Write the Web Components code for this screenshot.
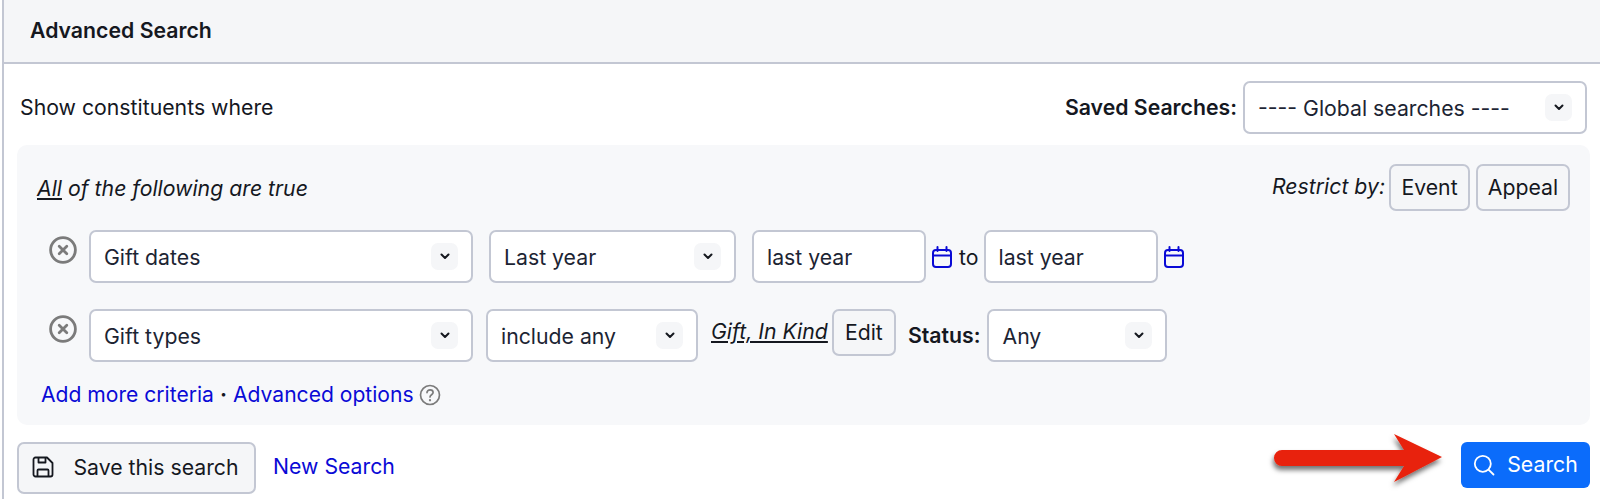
<!DOCTYPE html>
<html lang="en">
<head>
<meta charset="utf-8">
<title>Advanced Search</title>
<style>
  html, body { margin: 0; padding: 0; height: 499px; overflow: hidden; background: #fff; }
  body { font-family: Inter, "Noto Sans", sans-serif; font-size: 21.25px; color: #15181f; }
</style>
</head>
<body>

<search-box>
  <span slot="title">Advanced Search</span>

  <span slot="intro">Show constituents where</span>
  <saved-searches slot="intro-right"></saved-searches>

  <criteria-panel slot="panel">
    <span slot="heading"><u>All</u> of the following are true</span>
    <restrict-by slot="restrict"></restrict-by>

    <criteria-row slot="rows" pad="19">
      <drop-select style="width:384px">Gift dates</drop-select>
      <drop-select style="width:247px;margin-left:16px">Last year</drop-select>
      <date-range></date-range>
    </criteria-row>

    <criteria-row slot="rows" pad="26">
      <drop-select style="width:384px">Gift types</drop-select>
      <drop-select style="width:212px;margin-left:13px">include any</drop-select>
      <type-status></type-status>
    </criteria-row>

    <panel-links slot="links"></panel-links>
  </criteria-panel>

  <search-footer slot="footer"></search-footer>
</search-box>

<script>
// Small helper, every component is just a template in an open shadow root
const define = (name, css, html, extra) => {
  const template = document.createElement('template');
  template.innerHTML = `<style>${css}</style>${html}`;
  class Element_ extends HTMLElement {
    constructor() {
      super();
      this.attachShadow({ mode: 'open' });
      this.shadowRoot.appendChild(template.content.cloneNode(true));
    }
    connectedCallback() {
      if (extra) extra.call(this);
    }
  }
  customElements.define(name, Element_);
};

const chevron = `<svg width="10" height="7" viewBox="0 0 10 7" fill="none" stroke="#15181f" stroke-width="2" stroke-linecap="round" stroke-linejoin="round"><path d="M1.500 1.500 5 5l3.500-3.500"/></svg>`;

const calendar = `<svg width="20" height="22" viewBox="0 0 20 22" fill="none" stroke="#0a0ad6" stroke-width="2" stroke-linecap="round" stroke-linejoin="round"><rect x="1" y="4" width="18" height="17" rx="3"/><path d="M2 9.500h16M5.500 1v4M14.500 1v4"/></svg>`;

const removeIcon = `<svg width="28" height="28" viewBox="0 0 28 28" fill="none" stroke="#7b7b7b" stroke-width="2.800" stroke-linecap="round"><circle cx="14" cy="14" r="12.400"/><path d="m10.200 10.200 7.600 7.600M17.800 10.200l-7.600 7.600"/></svg>`;

// ---- basic controls ----

define('drop-select', `
  :host { display: block; box-sizing: border-box; height: 53px; flex: none; }
  .box {
    box-sizing: border-box; height: 100%; display: flex; align-items: center; justify-content: space-between;
    padding: 0 13px 0 13px; background: #fff; border: 2px solid #c3c7d3; border-radius: 7px;
    color: #1c2433; white-space: nowrap;
  }
  .arrow { width: 27px; height: 27px; border-radius: 7px; background: #f5f6f8; display: flex; align-items: center; justify-content: center; }
`, `<div class="box"><span><slot></slot></span><span class="arrow">${chevron}</span></div>`);

define('text-input', `
  :host { display: block; height: 53px; flex: none; }
  .box {
    box-sizing: border-box; height: 100%; display: flex; align-items: center;
    padding: 0 13px; background: #fff; border: 2px solid #c3c7d3; border-radius: 7px;
    color: #1c2433;
  }
`, `<div class="box"><slot></slot></div>`);

define('soft-button', `
  :host { display: inline-block; flex: none; }
  .btn {
    box-sizing: border-box; height: 100%; padding-bottom: 2px; display: flex; align-items: center; justify-content: center; gap: 19px;
    background: #f5f6f8; border: 2px solid #c3c7d3; border-radius: 7px;
    color: #15181f; white-space: nowrap;
  }
`, `<div class="btn"><slot></slot></div>`);

// ---- page parts ----

define('saved-searches', `
  :host { display: flex; align-items: center; gap: 6px; }
  b { font-weight: 600; padding-bottom: 2px; }
`, `<b>Saved Searches:</b><drop-select style="width:344px">---- Global searches ----</drop-select>`);

define('restrict-by', `
  :host { display: flex; align-items: center; gap: 6px; }
  i { padding: 0 0 3px 0; margin-right: -2px; }
  soft-button { height: 47px; }
`, `<i>Restrict by:</i><soft-button style="width:81px">Event</soft-button><soft-button style="width:94px">Appeal</soft-button>`);

define('date-range', `
  :host { display: flex; align-items: center; margin-left: 16px; }
  .cal { display: flex; margin-left: 6px; padding-top: 0; }
  .to { margin: 0 5px 0 7px; }
`, `<text-input style="width:174px">last year</text-input><span class="cal">${calendar}</span><span class="to">to</span><text-input style="width:174px">last year</text-input><span class="cal">${calendar}</span>`);

define('type-status', `
  :host { display: flex; align-items: flex-start; margin-left: 13px; }
  .types { font-style: italic; text-decoration: underline; line-height: 44px; margin-right: 4px; white-space: nowrap; }
  soft-button { height: 47px; width: 64px; }
  b { font-weight: 600; line-height: 52px; margin: 0 7px 0 12px; white-space: nowrap; }
`, `<span class="types">Gift, In Kind</span><soft-button>Edit</soft-button><b>Status:</b><drop-select style="width:180px">Any</drop-select>`);

define('criteria-row', `
  :host { display: flex; align-items: flex-start; padding-left: 32px; }
  .remove { display: flex; width: 28px; margin-right: 12px; margin-top: 6px; flex: none; }
`, `<span class="remove">${removeIcon}</span><slot></slot>`, function () {
  this.style.marginTop = this.getAttribute('pad') + 'px';
});

define('panel-links', `
  :host { display: flex; align-items: center; padding-left: 24px; margin-top: 20px; font-size: 21.100px; }
  a { color: #0a0ad6; text-decoration: none; }
  .dot { margin: 0 6px; font-weight: 700; }
  svg { margin-left: 5px; }
`, `<a href="#">Add more criteria</a><span class="dot">·</span><a href="#">Advanced options</a>
  <svg width="22" height="22" viewBox="0 0 22 22" fill="none" stroke="#7b7b7b" stroke-width="1.700" stroke-linecap="round"><circle cx="11" cy="11" r="9.500"/><path d="M8 8.600c0-1.700 1.300-2.800 3.100-2.800s3 1.100 3 2.600c0 2.300-3.100 2.400-3.100 4.600"/><path d="M11 16.100v.2" stroke-width="2.200"/></svg>`);

define('criteria-panel', `
  :host { display: block; margin: 11px 10px 0 13px; background: #f7f8fa; border-radius: 10px; height: 280px; box-sizing: border-box; }
  .top { display: flex; align-items: center; justify-content: space-between; padding: 19px 20px 0 20px; height: 47px; box-sizing: content-box; }
  .heading { font-style: italic; padding-top: 1px; }
`, `<div class="top"><span class="heading"><slot name="heading"></slot></span><slot name="restrict"></slot></div>
  <slot name="rows"></slot><slot name="links"></slot>`);

define('search-footer', `
  :host { display: flex; align-items: flex-start; margin: 17px 10px 0 13px; }
  .save { width: 239px; height: 52px; }
  a { color: #0a0ad6; text-decoration: none; margin: 11px 0 0 17px; }
  .arrow { margin: -8px 5px 0 auto; display: block; overflow: visible; flex: none; }
  .go {
    width: 129px; height: 46px; box-sizing: border-box; padding-bottom: 2px; background: #0b6cfb; border-radius: 6px; color: #fff;
    display: flex; align-items: center; justify-content: center; gap: 12px;
  }
  .go svg { margin-top: 2px; }
  .floppy { display: flex; margin-left: -2px; }
`, `<soft-button class="save"><span class="floppy"><svg width="22" height="22" viewBox="0 0 22 22" fill="none" stroke="#15181f" stroke-width="1.800" stroke-linejoin="round"><path d="M3.500 1.500h11.500l5.500 5.500v11.500a2 2 0 0 1-2 2h-15a2 2 0 0 1-2-2v-15a2 2 0 0 1 2-2Z"/><path d="M6.500 1.800v4.700h7V1.800M5.500 20.500v-6a1 1 0 0 1 1-1h9a1 1 0 0 1 1 1v6"/></svg></span>Save this search</soft-button>
  <a href="#">New Search</a>
  <svg class="arrow" width="182" height="62" viewBox="0 0 182 62">
    <defs><filter id="s" x="-10%" y="-30%" width="120%" height="170%"><feDropShadow dx="-1" dy="4" stdDeviation="2.500" flood-color="#000" flood-opacity=".55"/></filter></defs>
    <path filter="url(#s)" fill="#e8200a" d="M8 16H130L120 0 168 23 120 48 130 32H8a8 8 0 0 1 0-16Z"/>
  </svg>
  <div class="go"><svg width="22" height="22" viewBox="0 0 22 22" fill="none" stroke="#fff" stroke-width="1.800" stroke-linecap="round"><circle cx="9.800" cy="9.800" r="8"/><path d="m15.800 15.800 4.700 4.700"/></svg>Search</div>`);

define('search-box', `
  :host { display: block; height: 499px; box-sizing: border-box; border-left: 2px solid #c3c7d3; margin-left: 2px; }
  header { height: 64px; box-sizing: border-box; padding: 0 0 2px 26px; background: #f5f6f8; border-bottom: 2px solid #c3c7d3; display: flex; align-items: center; font-weight: 600; }
  .intro { display: flex; align-items: center; justify-content: space-between; padding: 17px 13px 0 16px; }
  .intro > span { padding-bottom: 2px; }
`, `<header><slot name="title"></slot></header>
  <div class="intro"><span><slot name="intro"></slot></span><slot name="intro-right"></slot></div>
  <slot name="panel"></slot><slot name="footer"></slot>`);
</script>
</body>
</html>
